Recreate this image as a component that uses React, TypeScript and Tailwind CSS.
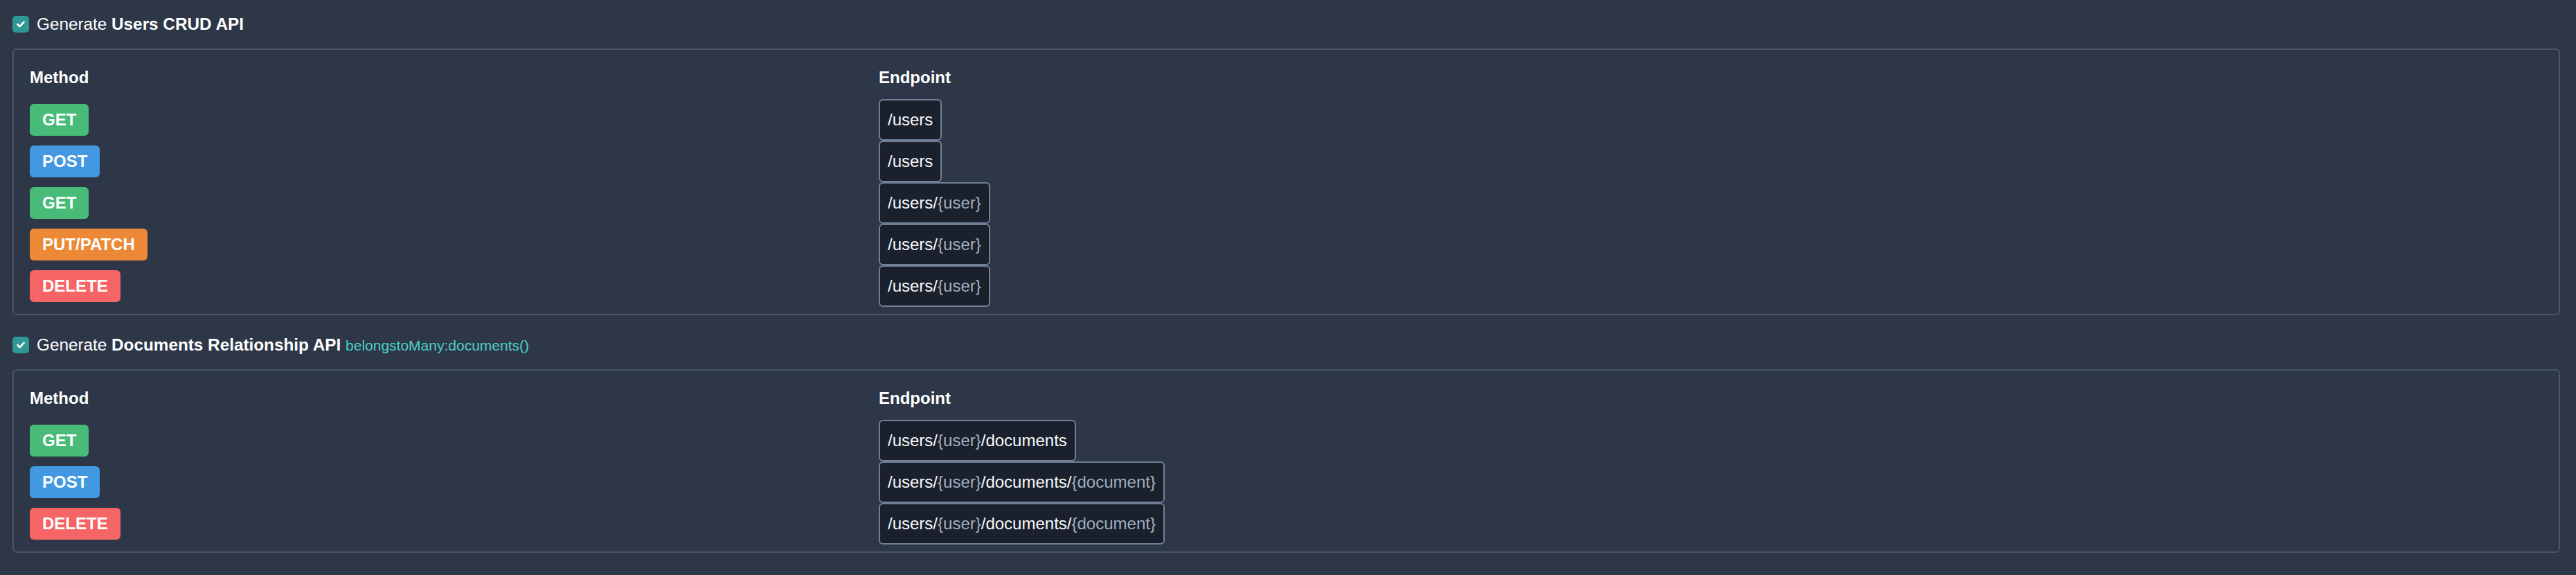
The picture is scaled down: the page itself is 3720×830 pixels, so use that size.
import React from 'react';

type Route = { method: string; path: string };

const badgeColors: Record<string, string> = {
  GET: 'bg-[#48bb78]',
  POST: 'bg-[#4299e1]',
  'PUT/PATCH': 'bg-[#ed8936]',
  DELETE: 'bg-[#f56565]',
};

const crudRoutes: Route[] = [
  { method: 'GET', path: '/users' },
  { method: 'POST', path: '/users' },
  { method: 'GET', path: '/users/{user}' },
  { method: 'PUT/PATCH', path: '/users/{user}' },
  { method: 'DELETE', path: '/users/{user}' },
];

const relationRoutes: Route[] = [
  { method: 'GET', path: '/users/{user}/documents' },
  { method: 'POST', path: '/users/{user}/documents/{document}' },
  { method: 'DELETE', path: '/users/{user}/documents/{document}' },
];

function Checkbox() {
  return (
    <span className="flex h-6 w-6 shrink-0 items-center justify-center rounded-[5px] bg-[#319795]">
      <svg width="12" height="10" viewBox="0 0 12 10" fill="none">
        <path d="M1.5 5.2 4.6 8.2 10.5 1.8" stroke="#fff" strokeWidth="2.6" strokeLinecap="round" strokeLinejoin="round" />
      </svg>
    </span>
  );
}

// split path so that {params} are shown dimmed
function PathText({ path }: { path: string }) {
  const parts = path.split(/(\{[^}]+\})/).filter(Boolean);
  return (
    <>
      {parts.map((p, i) =>
        p.startsWith('{') ? (
          <span key={i} className="text-[#a0aec0]">{p}</span>
        ) : (
          <span key={i}>{p}</span>
        )
      )}
    </>
  );
}

function RouteTable({ routes }: { routes: Route[] }) {
  return (
    <div className="mt-[17px] rounded-[6px] border-2 border-[#4a5568] px-[23px] pt-[22px] pb-[10px]">
      <div className="grid grid-cols-[1226px_1fr]">
        <div className="flex h-9 items-center font-bold">Method</div>
        <div className="flex h-9 items-center font-bold">Endpoint</div>
        <div className="col-span-2 h-[13px]" />
        {routes.map((r, i) => (
          <React.Fragment key={i}>
            <div className="flex h-[60px] items-center">
              <span className={`inline-flex h-[46px] items-center rounded-[6px] px-[18px] font-bold text-white ${badgeColors[r.method]}`}>
                {r.method}
              </span>
            </div>
            <div className="flex h-[60px] items-center">
              <span className="inline-flex h-[60px] items-center rounded-[6px] border-2 border-[#718096] bg-[#1a202c] px-[11px] text-[#f7fafc]">
                <PathText path={r.path} />
              </span>
            </div>
          </React.Fragment>
        ))}
      </div>
    </div>
  );
}

export default function App() {
  return (
    <div className="min-h-screen bg-[#2d3748] pt-[17px] pr-[23px] pl-[18px] font-['Liberation_Sans',Arial,sans-serif] text-[24px] leading-9 text-white">
      <section>
        <div className="flex h-9 items-center gap-[11px]">
          <Checkbox />
          <span className="text-[24.3px]">
            Generate <b className="font-bold">Users CRUD API</b>
          </span>
        </div>
        <RouteTable routes={crudRoutes} />
      </section>

      <section className="mt-[25px]">
        <div className="flex h-9 items-center gap-[11px]">
          <Checkbox />
          <span className="text-[24.3px]">
            Generate <b className="font-bold">Documents Relationship API</b>{' '}
            <span className="text-[21px] text-[#4fd1c5]">belongstoMany:documents()</span>
          </span>
        </div>
        <RouteTable routes={relationRoutes} />
      </section>
    </div>
  );
}
